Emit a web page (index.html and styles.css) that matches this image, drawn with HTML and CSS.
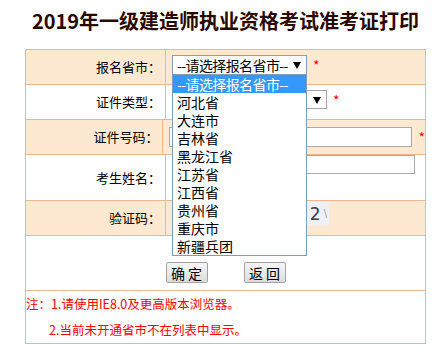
FILE: index.html
```html
<!DOCTYPE html>
<html lang="zh-CN">
    <head>
        <meta charset="UTF-8" />
        <meta name="viewport" content="width=device-width, initial-scale=1.0" />
        <title>准考证打印</title>
        <link rel="stylesheet" href="styles.css">
    </head>
    <body>
        <h1 class="title">2019年一级建造师执业资格考试准考证打印</h1>

        <div class="form">
            <div class="row shade">
                <div class="label">报名省市：</div>
                <div class="field pt5">
                    <div class="select-wrap">
                        <div class="select focus"><span class="tight">--请选择报名省市--</span><span class="arrow"></span></div>
                        <ul class="options">
                            <li class="active"><span class="tight">--请选择报名省市--</span></li>
                            <li>河北省</li>
                            <li>大连市</li>
                            <li>吉林省</li>
                            <li>黑龙江省</li>
                            <li>江苏省</li>
                            <li>江西省</li>
                            <li>贵州省</li>
                            <li>重庆市</li>
                            <li>新疆兵团</li>
                        </ul>
                    </div>
                    <span class="req">*</span>
                </div>
            </div>

            <div class="row">
                <div class="label">证件类型：</div>
                <div class="field pt5">
                    <div class="select type"><span class="arrow"></span></div>
                    <span class="req">*</span>
                </div>
            </div>

            <div class="row shade">
                <div class="label">证件号码：</div>
                <div class="field pt7">
                    <input class="text" type="text" />
                    <span class="req">*</span>
                </div>
            </div>

            <div class="row tall">
                <div class="label">考生姓名：</div>
                <div class="field pt0">
                    <input class="text short" type="text" />
                </div>
            </div>

            <div class="row shade">
                <div class="label">验证码：</div>
                <div class="field pt1">
                    <input class="text code" type="text" />
                    <div class="captcha"><span class="digit">2</span><span class="slash">\</span></div>
                </div>
            </div>

            <div class="row buttons">
                <button class="btn" type="button">确 定</button>
                <button class="btn" type="button">返 回</button>
            </div>

            <div class="row notes">
                <p>注：1.请使用IE8.0及更高版本浏览器。</p>
                <p class="indent">2.当前未开通省市不在列表中显示。</p>
            </div>
        </div>
    </body>
</html>
```

FILE: styles.css
```css
* {
    margin: 0;
    padding: 0;
    box-sizing: border-box;
}
body {
    font-family: "Noto Sans CJK SC", "Liberation Sans", sans-serif;
    font-size: 13px;
    color: #000;
    background: #fff;
}
.title {
    width: 401px;
    height: 49px;
    margin-left: 25px;
    padding-top: 8px;
    font-size: 20px;
    line-height: 26px;
    font-weight: 700;
    color: #2a0800;
    text-align: center;
}
.form {
    width: 401px;
    margin-left: 25px;
    border: 1px solid #eeb68f;
}
.row {
    display: flex;
    height: 35px;
    border-bottom: 1px solid #eeb68f;
}
.row.tall {
    height: 46px;
}
.row.shade {
    background: #fde9d1;
}
.label {
    width: 140px;
    display: flex;
    align-items: center;
    justify-content: flex-end;
    padding-right: 4px;
    border-right: 1px solid #eeb68f;
    line-height: 16px;
}
.field {
    flex: 1;
    display: flex;
    align-items: flex-start;
    padding-left: 6px;
}
.pt0 { padding-top: 0; }
.pt1 { padding-top: 1px; }
.pt5 { padding-top: 5px; }
.pt7 { padding-top: 7px; }

.select-wrap {
    position: relative;
}
.select {
    position: relative;
    width: 135px;
    height: 20px;
    padding-left: 4px;
    font-size: 14px;
    line-height: 18px;
    border: 1px solid #8a9cb6;
    background: #fff;
    white-space: nowrap;
}
.select.type {
    width: 155px;
    height: 19px;
    border-color: #a6a6a6;
}
.tight {
    letter-spacing: -0.6px;
}
.arrow {
    position: absolute;
    right: 5px;
    top: 6px;
    width: 0;
    height: 0;
    border-left: 4px solid transparent;
    border-right: 4px solid transparent;
    border-top: 7px solid #000;
}
.options {
    position: absolute;
    left: 0;
    top: 19px;
    z-index: 10;
    width: 135px;
    height: 182px;
    list-style: none;
    background: #fff;
    border: 1px solid #7f9db9;
}
.options li {
    height: 18px;
    padding-left: 4px;
    font-size: 14px;
    line-height: 18px;
    white-space: nowrap;
}
.options li.active {
    background: #3399ff;
    color: #fff;
}
.req {
    margin-left: 6px;
    color: #f00;
    font-size: 14px;
    line-height: 20px;
}
.text {
    width: 243px;
    height: 20px;
    border: 1px solid #a9a9a9;
    background: #fff;
}
.text.short {
    height: 19px;
}
.text.code {
    width: 100px;
    margin-top: 2px;
}
.captcha {
    width: 51px;
    height: 23px;
    margin-left: 6px;
    display: flex;
    align-items: center;
    justify-content: flex-end;
    padding-right: 2px;
    background: #eef0f5;
    font-family: "DejaVu Sans", sans-serif;
}
.captcha .digit {
    font-size: 17px;
    color: #3b3b4b;
}
.captcha .slash {
    margin-left: 3px;
    font-size: 10px;
    color: #9a9aa8;
}
.buttons {
    height: 55px;
    justify-content: center;
    align-items: flex-start;
    gap: 36px;
    padding-top: 26px;
}
.btn {
    width: 42px;
    height: 21px;
    font-family: "Noto Sans CJK SC", sans-serif;
    font-size: 14px;
    line-height: 18px;
    border: 1px solid #a3a3a3;
    border-radius: 2px;
    background: linear-gradient(#f6f6f6, #dcdcdc);
    color: #000;
}
.notes {
    height: 52px;
    display: block;
    border-bottom: 0;
    color: #f00;
    font-size: 12.5px;
    line-height: 26px;
}
.notes .indent {
    padding-left: 23px;
}
```
